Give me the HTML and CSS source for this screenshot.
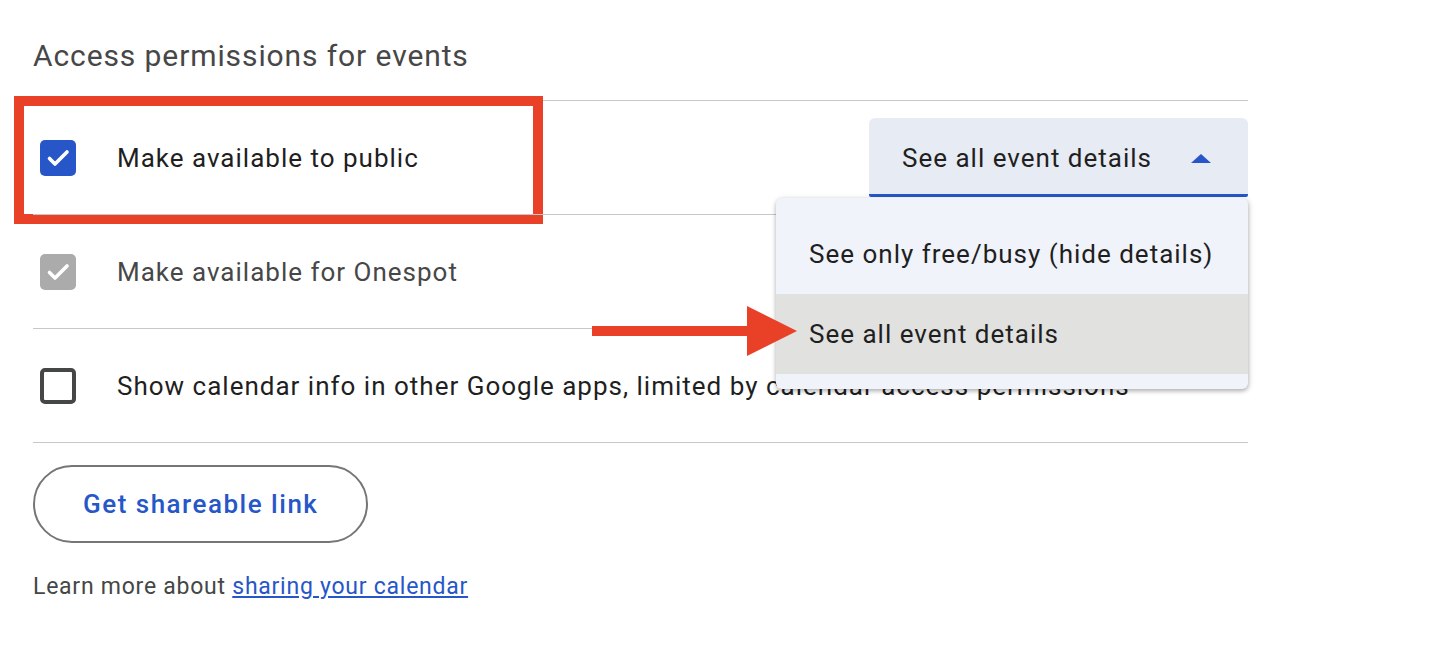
FILE: index.html
```html
<!DOCTYPE html>
<html lang="en">
<head>
  <meta charset="UTF-8" />
  <meta name="viewport" content="width=device-width, initial-scale=1.0" />
  <title>Access permissions</title>
  <link rel="stylesheet" href="styles.css">
</head>
<body>
  <div class="page">
    <h2 class="title">Access permissions for events</h2>

    <div class="rows">
      <div class="row">
        <span class="box checked">
          <svg viewBox="0 0 36 36"><path d="M9.5 18.5l5.5 5.5L27 12" fill="none" stroke="#fff" stroke-width="3.6" stroke-linecap="round" stroke-linejoin="round"/></svg>
        </span>
        <span class="label">Make available to public</span>
        <div class="select">
          <div class="select-btn">
            <span>See all event details</span>
            <span class="caret"></span>
          </div>
          <ul class="menu">
            <li>See only free/busy (hide details)</li>
            <li class="active">See all event details</li>
          </ul>
        </div>
        <div class="mark"></div>
      </div>

      <div class="row">
        <span class="box disabled">
          <svg viewBox="0 0 36 36"><path d="M9.5 18.5l5.5 5.5L27 12" fill="none" stroke="#fff" stroke-width="3.6" stroke-linecap="round" stroke-linejoin="round"/></svg>
        </span>
        <span class="label muted">Make available for Onespot</span>
      </div>

      <div class="row">
        <span class="box empty"></span>
        <span class="label">Show calendar info in other Google apps, limited by calendar access permissions</span>
      </div>
    </div>

    <button class="share-btn">Get shareable link</button>
    <p class="learn">Learn more about <a href="#">sharing your calendar</a></p>

    <div class="arrow"><span class="shaft"></span><span class="head"></span></div>
  </div>
</body>
</html>
```

FILE: styles.css
```css
body { margin: 0; background: #fff; font-family: Roboto, "Liberation Sans", sans-serif; color: #1f1f1f; }
.page { position: relative; padding: 0 192px 0 33px; }
.title { margin: 0 0 26px; padding-top: 38px; font-size: 30px; line-height: 36px; font-weight: 400; letter-spacing: 0.9px; color: #474747; }

.rows { border-bottom: 1px solid #c7c7c7; }
.row { position: relative; display: flex; align-items: center; height: 113px; border-top: 1px solid #c7c7c7; }
.box { width: 36px; height: 36px; margin-left: 7px; box-sizing: border-box; border-radius: 5px; display: flex; align-items: center; justify-content: center; flex-shrink: 0; }
.box svg { width: 36px; height: 36px; }
.box.checked { background: #2656c8; }
.box.disabled { background: #ababab; }
.box.empty { border: 4px solid #444746; }
.label { margin-left: 41px; font-size: 26px; line-height: 32px; letter-spacing: 1px; white-space: nowrap; }
.label.muted { color: #474747; }

.select { position: relative; margin-left: auto; }
.select-btn { width: 379px; height: 79px; padding: 3px 37px 0 33px; box-sizing: border-box; display: flex; align-items: center; justify-content: space-between; background: #e7ebf4; border-bottom: 3px solid #2656c8; border-radius: 6px 6px 2px 2px; font-size: 26px; letter-spacing: 1px; }
.caret { width: 0; height: 0; border-left: 10px solid transparent; border-right: 10px solid transparent; border-bottom: 9px solid #2656c8; margin-top: 2px; }
.menu { position: absolute; z-index: 2; top: 80px; left: -93px; width: 472px; margin: 0; padding: 16px 0 15px; list-style: none; background: #f0f3f9; border-radius: 6px; box-shadow: 0 2px 4px rgba(0,0,0,0.25), 1px 1px 6px rgba(0,0,0,0.12); box-sizing: border-box; }
.menu li { height: 80px; display: flex; align-items: center; padding-left: 33px; font-size: 26px; letter-spacing: 1px; white-space: nowrap; }
.menu li.active { background: #e1e1df; }

.mark { position: absolute; left: -19px; top: -5px; width: 529px; height: 128px; box-sizing: border-box; border: 10px solid #e94128; pointer-events: none; }

.share-btn { display: block; margin-top: 22px; height: 78px; padding: 0 48px; background: #fff; border: 2px solid #747775; border-radius: 40px; font-family: inherit; font-size: 26px; font-weight: 500; letter-spacing: 1.5px; color: #2656c8; }
.learn { margin: 30px 0 0; font-size: 23px; line-height: 28px; letter-spacing: 0.75px; color: #444746; }
.learn a { color: #2656c8; }

.arrow { position: absolute; left: 592px; top: 306px; display: flex; align-items: center; z-index: 3; }
.shaft { width: 156px; height: 10px; background: #e94128; }
.head { width: 0; height: 0; border-top: 25px solid transparent; border-bottom: 25px solid transparent; border-left: 50px solid #e94128; margin-left: -1px; }
```
